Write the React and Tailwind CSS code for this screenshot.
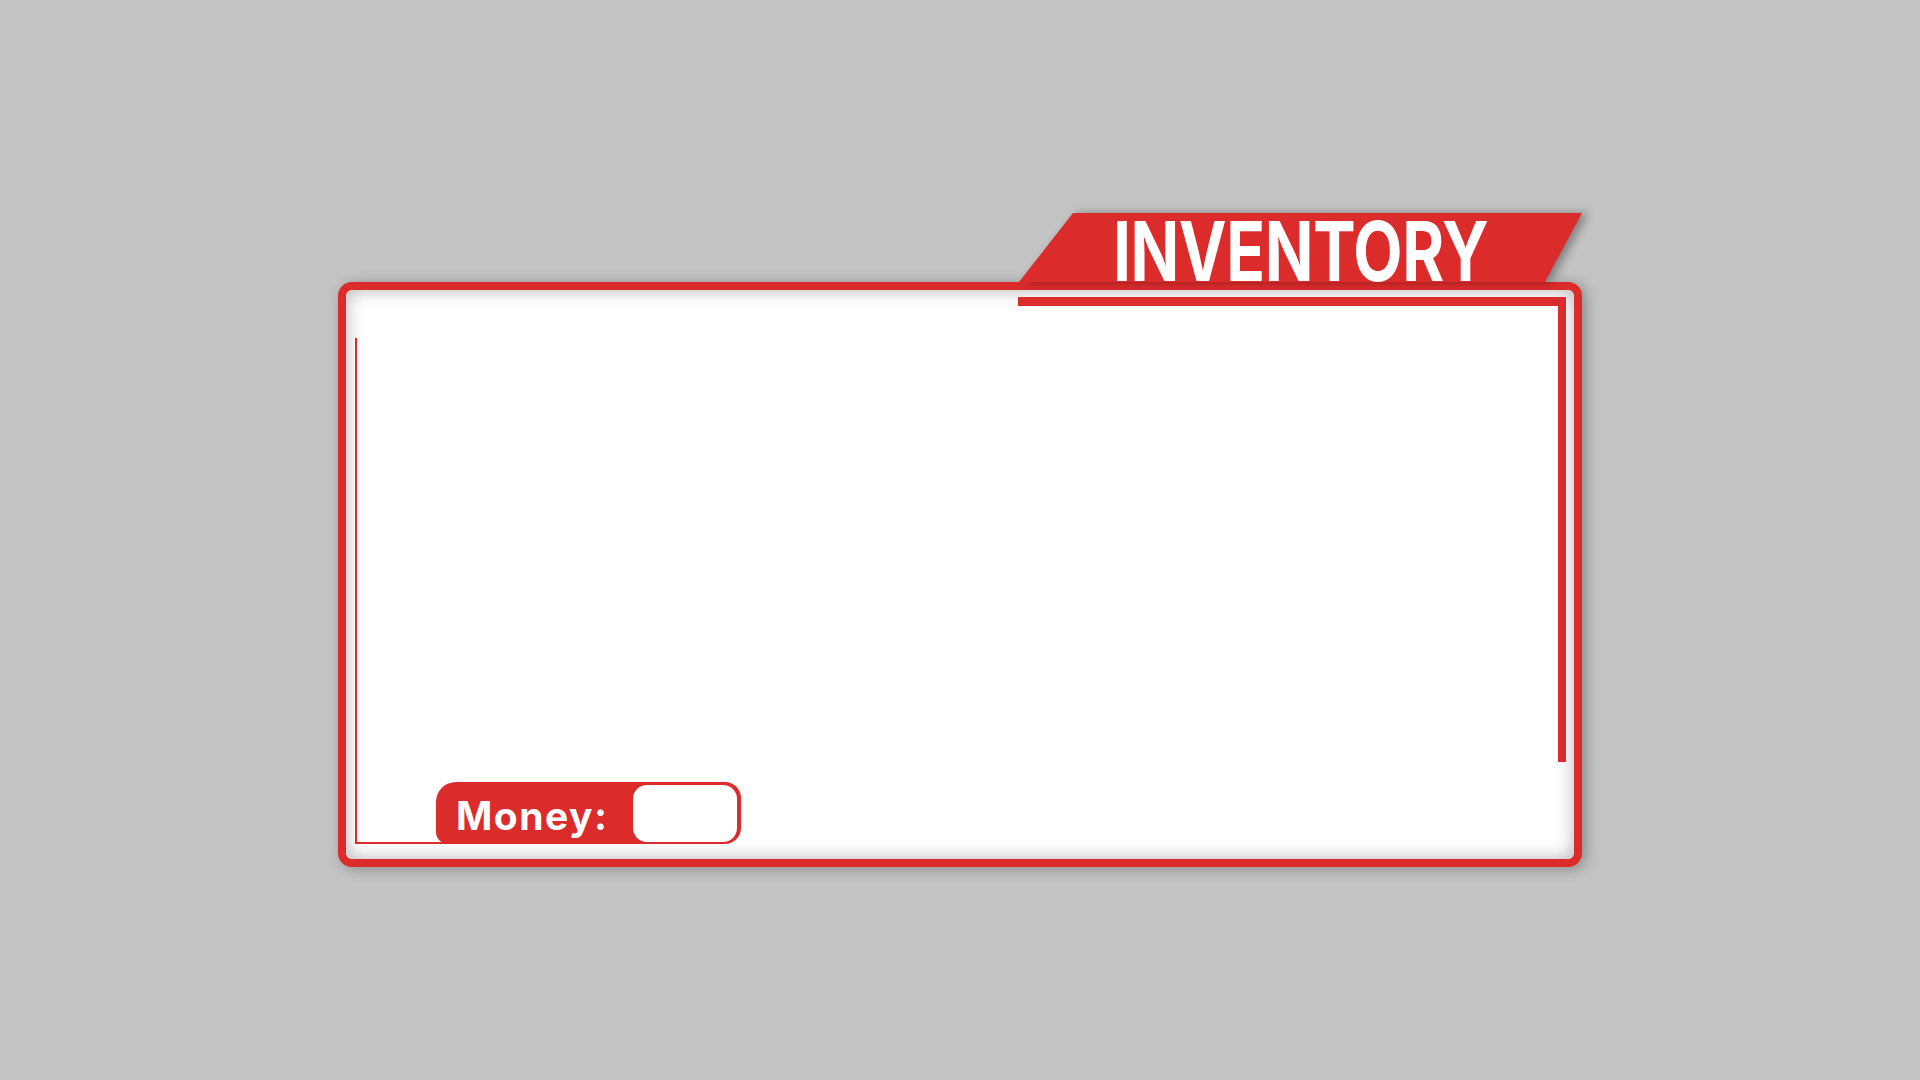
export default function App() {
  return (
    <div className="min-h-screen w-full bg-[#c4c4c4] flex items-center justify-center">
      <div className="w-[1244px] flex flex-col">
        {/* title tab */}
        <div className="flex justify-end drop-shadow-[6px_0_5px_rgba(0,0,0,0.35)]">
          <div className="w-[563px] h-[69px] bg-[#dc2b2b] [clip-path:polygon(54px_0,100%_0,526px_100%,0_100%)] flex items-end justify-center px-[20px]">
            <span className="font-['Inter',sans-serif] font-bold text-white text-[82px] leading-[60px] tracking-[-0.5px] whitespace-nowrap scale-x-[0.78] origin-bottom">
              INVENTORY
            </span>
          </div>
        </div>

        {/* main frame */}
        <div className="h-[585px] rounded-[14px] border-8 border-[#dc2b2b] bg-white shadow-[4px_2px_14px_rgba(0,0,0,0.3)]">
          <div className="relative h-full w-full rounded-[8px] bg-white shadow-[inset_0_0_18px_rgba(0,0,0,0.3)]">
            {/* top + right accent */}
            <div className="absolute top-[7px] right-[8px] w-[548px] h-[465px] border-t-[9px] border-r-[8px] border-[#dc2b2b]" />
            {/* left thin line */}
            <div className="absolute left-[9px] top-[48px] bottom-[15px] w-[200px] border-l-2 border-b-2 border-[#dc2b2b]" />

            {/* money badge */}
            <div className="absolute left-[90px] bottom-[15px] h-[62px] w-[305px] flex items-stretch bg-[#dc2b2b] rounded-tl-[20px] rounded-bl-[12px] rounded-r-[16px] pr-[4px] pt-[3px] pb-[2px]">
              <div className="flex-1 flex items-center pl-[20px]">
                <span className="font-['Inter',sans-serif] font-bold text-white text-[39px] leading-none tracking-[1.5px] translate-y-[2px]">
                  Money:
                </span>
              </div>
              <div className="w-[104px] rounded-[14px] bg-white" />
            </div>
          </div>
        </div>
      </div>
    </div>
  );
}
